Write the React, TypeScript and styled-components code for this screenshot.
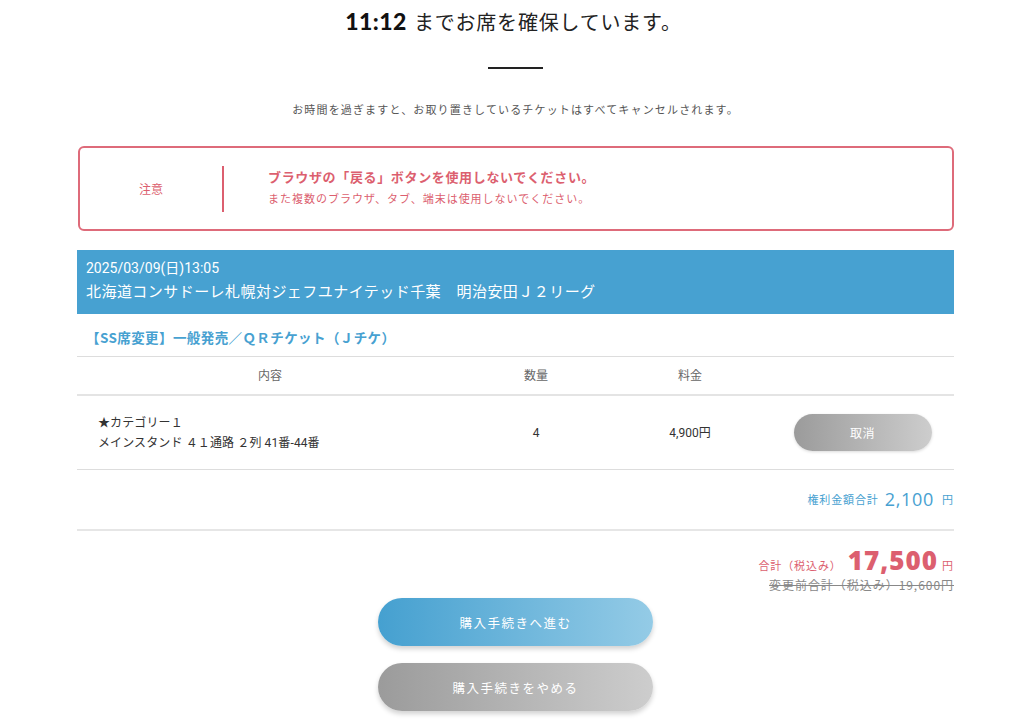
import * as React from 'react';
import styled, {createGlobalStyle} from 'styled-components';

const GlobalStyle = createGlobalStyle`
    html, body {
        margin: 0;
        padding: 0;
        background: #fff;
    }
    body {
        font-family: 'Noto Sans CJK JP', 'Noto Sans', sans-serif;
        color: #333;
    }
`;

const BLUE = '#47a1d1';
const RED = '#dc5f6f';

const Page = styled.div`
    width: 877px;
    margin-left: 77px;
    padding-bottom: 12px;
`;

const Heading = styled.h1`
    margin: 0;
    height: 42px;
    display: flex;
    align-items: center;
    justify-content: center;
    gap: 7px;
    font-size: 20px;
    font-weight: 400;
    color: #222;
    letter-spacing: 0.04em;
    padding-right: 4px;
`;

const Clock = styled.span`
    font-family: Lato, 'Noto Sans', sans-serif;
    font-weight: 900;
    font-size: 23px;
    color: #111;
    letter-spacing: 0.02em;
`;

const Rule = styled.div`
    width: 55px;
    height: 2px;
    background: #222;
    margin: 25px auto 0;
`;

const Notice = styled.p`
    margin: 32px 0 0;
    text-align: center;
    font-size: 11px;
    color: #555;
    letter-spacing: 0.105em;
    line-height: 16px;
`;

const AlertBox = styled.div`
    margin: 29px 0 0 1px;
    width: 876px;
    box-sizing: border-box;
    height: 85px;
    border: 2px solid #de6b7a;
    border-radius: 6px;
    display: flex;
    align-items: center;
`;

const AlertLabel = styled.div`
    width: 142px;
    text-align: center;
    font-size: 12px;
    color: ${RED};
    box-sizing: border-box;
`;

const AlertDivider = styled.div`
    width: 2px;
    height: 46px;
    background: ${RED};
    margin-right: 44px;
`;

const AlertBody = styled.div`
    display: flex;
    flex-direction: column;
    gap: 4px;
    color: ${RED};
    margin-top: -4px;
`;

const AlertTitle = styled.div`
    font-size: 13px;
    font-weight: 700;
    letter-spacing: 0.05em;
`;

const AlertText = styled.div`
    font-size: 11px;
    letter-spacing: 0.09em;
`;

const EventHeader = styled.div`
    margin-top: 19px;
    background: ${BLUE};
    color: #fff;
    height: 64px;
    box-sizing: border-box;
    padding: 9px 9px 0;
    display: flex;
    flex-direction: column;
    gap: 3px;
`;

const EventDate = styled.div`
    font-family: Roboto, 'Noto Sans CJK JP', sans-serif;
    font-size: 14px;
    line-height: 18px;
`;

const EventTitle = styled.div`
    font-size: 15px;
    line-height: 22px;
    letter-spacing: 0.03em;
`;

const TicketType = styled.div`
    height: 43px;
    display: flex;
    align-items: center;
    padding-left: 9px;
    padding-top: 3px;
    box-sizing: border-box;
    color: ${BLUE};
    font-size: 13.5px;
    font-weight: 700;
    letter-spacing: 0.03em;
    border-bottom: 1px solid #ddd;
`;

const TableRow = styled.div<{$head?: boolean}>`
    display: grid;
    grid-template-columns: 386px 146px 162px 183px;
    align-items: center;
    height: ${({$head}) => ($head ? '37px' : '73px')};
    border-bottom: ${({$head}) => ($head ? '2px solid #e4e4e4' : '1px solid #ddd')};
    font-size: 12px;
    color: ${({$head}) => ($head ? '#666' : '#333')};
`;

const Cell = styled.div<{$left?: boolean}>`
    text-align: ${({$left}) => ($left ? 'left' : 'center')};
    padding-left: ${({$left}) => ($left ? '21px' : '0')};
    font-family: Roboto, 'Noto Sans CJK JP', sans-serif;
    line-height: 20px;
`;

const ItemLine = styled.div`
    letter-spacing: 0.01em;
`;

const PillButton = styled.button<{$tone: 'blue' | 'gray'; $small?: boolean}>`
    border: none;
    cursor: pointer;
    border-radius: 999px;
    color: #fff;
    font-family: 'Noto Sans CJK JP', sans-serif;
    background: ${({$tone}) =>
        $tone === 'blue'
            ? 'linear-gradient(90deg, #45a0d0 0%, #94cbe6 100%)'
            : 'linear-gradient(90deg, #9b9b9b 0%, #cdcdcd 100%)'};
    box-shadow: ${({$small}) => ($small ? '0 1px 3px rgba(0,0,0,0.15)' : '0 3px 5px rgba(0,0,0,0.18)')};
    width: ${({$small}) => ($small ? '138px' : '275px')};
    height: ${({$small}) => ($small ? '37px' : '48px')};
    font-size: ${({$small}) => ($small ? '12px' : '12.5px')};
    letter-spacing: ${({$small}) => ($small ? '0.04em' : '0.12em')};
`;

const Totals = styled.div`
    display: flex;
    flex-direction: column;
    align-items: flex-end;
`;

const RightsRow = styled.div`
    height: 61px;
    width: 100%;
    box-sizing: border-box;
    border-bottom: 2px solid #e6e6e6;
    display: flex;
    align-items: center;
    justify-content: flex-end;
    gap: 6px;
    color: ${BLUE};
    font-size: 11px;
    letter-spacing: 0.08em;
    padding-bottom: 2px;
`;

const RightsAmount = styled.span`
    font-family: 'Open Sans', sans-serif;
    font-size: 18px;
    font-weight: 400;
    letter-spacing: 0.04em;
    margin-right: 2px;
`;

const GrandRow = styled.div`
    margin-top: 11px;
    display: flex;
    align-items: baseline;
    gap: 4px;
    color: ${RED};
    font-size: 11px;
    letter-spacing: 0.08em;
`;

const GrandAmount = styled.span`
    font-family: 'Open Sans', sans-serif;
    font-size: 26px;
    font-weight: 800;
    letter-spacing: 0.04em;
    margin-left: 2px;
`;

const PreviousTotal = styled.div`
    margin-top: -2px;
    font-size: 12px;
    color: #888;
    text-decoration: line-through;
    letter-spacing: 0.08em;
`;

const ButtonStack = styled.div`
    display: flex;
    flex-direction: column;
    align-items: center;
    gap: 17px;
    margin-top: 5px;
`;

const App = () => {
    return (
        <>
            <GlobalStyle />
            <Page>
                <Heading>
                    <Clock>11:12</Clock>
                    <span>までお席を確保しています。</span>
                </Heading>
                <Rule />
                <Notice>お時間を過ぎますと、お取り置きしているチケットはすべてキャンセルされます。</Notice>

                <AlertBox>
                    <AlertLabel>注意</AlertLabel>
                    <AlertDivider />
                    <AlertBody>
                        <AlertTitle>ブラウザの「戻る」ボタンを使用しないでください。</AlertTitle>
                        <AlertText>また複数のブラウザ、タブ、端末は使用しないでください。</AlertText>
                    </AlertBody>
                </AlertBox>

                <EventHeader>
                    <EventDate>2025/03/09(日)13:05</EventDate>
                    <EventTitle>北海道コンサドーレ札幌対ジェフユナイテッド千葉　明治安田Ｊ２リーグ</EventTitle>
                </EventHeader>

                <TicketType>【SS席変更】一般発売／ＱＲチケット（Ｊチケ）</TicketType>

                <TableRow $head>
                    <Cell>内容</Cell>
                    <Cell>数量</Cell>
                    <Cell>料金</Cell>
                    <Cell />
                </TableRow>
                <TableRow>
                    <Cell $left>
                        <ItemLine>★カテゴリー１</ItemLine>
                        <ItemLine>メインスタンド ４１通路 ２列 41番-44番</ItemLine>
                    </Cell>
                    <Cell>4</Cell>
                    <Cell>4,900円</Cell>
                    <Cell>
                        <PillButton $tone="gray" $small>
                            取消
                        </PillButton>
                    </Cell>
                </TableRow>

                <Totals>
                    <RightsRow>
                        <span>権利金額合計</span>
                        <RightsAmount>2,100</RightsAmount>
                        <span>円</span>
                    </RightsRow>
                    <GrandRow>
                        <span>合計（税込み）</span>
                        <GrandAmount>17,500</GrandAmount>
                        <span>円</span>
                    </GrandRow>
                    <PreviousTotal>変更前合計（税込み）19,600円</PreviousTotal>
                </Totals>

                <ButtonStack>
                    <PillButton $tone="blue">購入手続きへ進む</PillButton>
                    <PillButton $tone="gray">購入手続きをやめる</PillButton>
                </ButtonStack>
            </Page>
        </>
    );
};

export default App;
